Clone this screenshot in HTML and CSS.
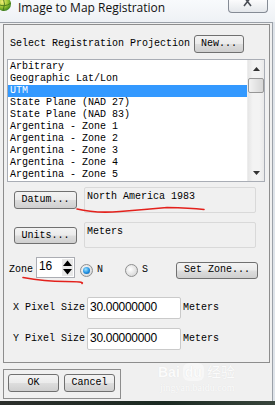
FILE: index.html
```html
<!DOCTYPE html>
<html>
<head>
<meta charset="utf-8">
<link rel="stylesheet" href="styles.css">
</head>
<body>
<div class="screen">
  <div class="titlebar">
    <svg class="app-icon" width="12" height="12" viewBox="0 0 12 12">
      <defs>
        <radialGradient id="g" cx="0.4" cy="0.35" r="0.7">
          <stop offset="0" stop-color="#f4f07a"/>
          <stop offset="0.55" stop-color="#9bc531"/>
          <stop offset="1" stop-color="#2f7a1e"/>
        </radialGradient>
      </defs>
      <circle cx="4" cy="4" r="7" fill="url(#g)"/>
      <path d="M-2 4 Q4 8 11 3" stroke="#3a6b17" stroke-width="0.8" fill="none"/>
      <path d="M3 -3 Q6 4 3 11" stroke="#3a6b17" stroke-width="0.8" fill="none"/>
    </svg>
    <span class="title">Image to Map Registration</span>
    <div class="close">
      <svg width="10" height="7" viewBox="0 0 10 7">
        <path d="M1 -3 L8 6 M8 -3 L1 6" stroke="#4b4f57" stroke-width="1.6" fill="none"/>
      </svg>
    </div>
  </div>

  <div class="client">
    <div class="panel">
      <div class="select-row">
        <span>Select Registration Projection</span>
        <button class="btn new-btn">New...</button>
      </div>

      <div class="list">
        <ul class="items">
          <li>Arbitrary</li>
          <li>Geographic Lat/Lon</li>
          <li class="selected">UTM</li>
          <li>State Plane (NAD 27)</li>
          <li>State Plane (NAD 83)</li>
          <li>Argentina - Zone 1</li>
          <li>Argentina - Zone 2</li>
          <li>Argentina - Zone 3</li>
          <li>Argentina - Zone 4</li>
          <li>Argentina - Zone 5</li>
        </ul>
        <div class="scroll">
          <div class="arrow">
            <svg width="7" height="4" viewBox="0 0 7 4"><path d="M0 4 L3.5 0 L7 4 Z" fill="#333"/></svg>
          </div>
          <div class="thumb"></div>
          <div class="track"></div>
          <div class="arrow">
            <svg width="7" height="4" viewBox="0 0 7 4"><path d="M0 0 L3.5 4 L7 0 Z" fill="#333"/></svg>
          </div>
        </div>
      </div>

      <div class="field-row datum-row">
        <button class="btn side-btn">Datum...</button>
        <div class="info">North America 1983</div>
      </div>

      <div class="field-row units-row">
        <button class="btn side-btn units-btn">Units...</button>
        <div class="info">Meters</div>
      </div>

      <div class="zone-row">
        <span class="zone-label">Zone</span>
        <div class="spin">
          <span class="spin-value">16</span>
          <svg class="spin-arrows" width="11" height="17" viewBox="0 0 11 17">
            <rect x="0" y="0" width="11" height="17" fill="#e8e8e8"/>
            <path d="M1 7 L5.5 1.5 L10 7 Z" fill="#000"/>
            <path d="M1 10 L5.5 15.5 L10 10 Z" fill="#000"/>
          </svg>
        </div>
        <span class="radio checked"></span>
        <span class="radio-label">N</span>
        <span class="radio radio-s"></span>
        <span class="radio-label">S</span>
        <button class="btn setzone-btn">Set Zone...</button>
      </div>

      <div class="px-row x-row">
        <span>X Pixel Size</span>
        <div class="px-field">30.00000000</div>
        <span class="unit">Meters</span>
      </div>
      <div class="px-row y-row">
        <span>Y Pixel Size</span>
        <div class="px-field">30.00000000</div>
        <span class="unit">Meters</span>
      </div>
    </div>

    <div class="actions">
      <button class="btn action-btn">OK</button>
      <button class="btn action-btn">Cancel</button>
    </div>
  </div>
  <div class="desktop"></div>

  <div class="watermark">
    <div class="wm-logo"><span class="wm-bai">Bai</span><span class="wm-du">du</span><span class="wm-cn">经验</span></div>
    <div class="wm-url">jingyan.baidu.com</div>
  </div>

  <svg class="annotations" width="275" height="405" viewBox="0 0 275 405">
    <path d="M77 209 Q95 213.5 120 211.5 T167 207.5 Q190 208 204 209.5" stroke="#e3211c" stroke-width="1.6" fill="none" stroke-linecap="round"/>
    <path d="M23 277.5 Q45 281.5 65 281.5 T82 283.5" stroke="#e3211c" stroke-width="1.6" fill="none" stroke-linecap="round"/>
  </svg>
</div>
</body>
</html>
```

FILE: styles.css
```css
* {
  box-sizing: border-box;
}

html,
body {
  margin: 0;
  padding: 0;
}

body {
  width: 275px;
  height: 405px;
  overflow: hidden;
  background: #dfe4ea;
  font-family: "Liberation Mono", "DejaVu Sans Mono", monospace;
  font-size: 10px;
  line-height: 12px;
  color: #000;
}

.screen {
  position: relative;
  width: 275px;
  height: 405px;
}

/* ---------- title bar ---------- */
.titlebar {
  height: 22px;
  display: flex;
  align-items: flex-start;
  background: linear-gradient(#f8fafc, #eef1f5);
}

.app-icon {
  flex: none;
  display: block;
}

.title {
  font-family: "Open Sans", "Liberation Sans", sans-serif;
  font-size: 12px;
  line-height: 14px;
  margin-left: 6px;
  margin-top: 1px;
  color: #111;
}

.close {
  margin-left: auto;
  margin-right: 7px;
  width: 40px;
  height: 13px;
  border: 1px solid #858b95;
  border-top: none;
  border-radius: 0 0 4px 4px;
  background: linear-gradient(#fbfbfc, #e4e7eb);
  display: flex;
  justify-content: center;
}

/* ---------- client area ---------- */
.client {
  width: 273px;
  height: 379px;
  border-top: 1px solid #9ba1a9;
  border-right: 1px solid #9ba1a9;
  background: #f0f0f0;
  padding: 1px 0 2px 3px;
}

.panel {
  width: 267px;
  height: 339px;
  border: 1px solid #8d8d8d;
}

.btn {
  font-family: "Liberation Mono", "DejaVu Sans Mono", monospace;
  font-size: 10px;
  line-height: 12px;
  color: #000;
  padding: 0;
  margin: 0;
  border: 1px solid #707070;
  border-radius: 3px;
  background: linear-gradient(#f3f3f3 0%, #ebebeb 48%, #dddddd 52%, #cfcfcf 100%);
  display: flex;
  align-items: center;
  justify-content: center;
}

.select-row {
  display: flex;
  align-items: center;
  height: 18px;
  margin-top: 10px;
  padding-left: 6px;
}

.new-btn {
  margin-left: 4px;
  width: 50px;
  height: 18px;
}

/* ---------- list ---------- */
.list {
  margin: 6px 0 0 3px;
  width: 258px;
  height: 123px;
  border: 1px solid #a9adb5;
  background: #fff;
  display: flex;
}

.items {
  flex: 1;
  list-style: none;
  margin: 0;
  padding: 1px 0 0 0;
}

.items li {
  height: 12px;
  line-height: 12px;
  padding-left: 2px;
  white-space: nowrap;
}

.items li.selected {
  background: #3399ff;
  color: #fff;
}

.scroll {
  width: 17px;
  display: flex;
  flex-direction: column;
  background: linear-gradient(to right, #e6e6e6, #f3f3f3 30%, #f3f3f3 70%, #e9e9e9);
  border-left: 1px solid #ededed;
}

.arrow {
  height: 17px;
  display: flex;
  align-items: center;
  justify-content: center;
}

.thumb {
  height: 15px;
  margin: 1px 0 0 0;
  border: 1px solid #979797;
  border-radius: 2px;
  background: linear-gradient(to right, #f2f2f2, #e4e4e4 50%, #d6d6d6);
}

.track {
  flex: 1;
}

/* ---------- datum / units ---------- */
.field-row {
  display: flex;
  align-items: flex-start;
  gap: 7px;
  height: 26px;
  padding-left: 10px;
}

.datum-row {
  margin-top: 5px;
}

.units-row {
  margin-top: 9px;
}

.side-btn {
  width: 63px;
  height: 18px;
  margin-top: 4px;
}

.units-btn {
  margin-top: 5px;
  height: 17px;
}

.info {
  width: 172px;
  height: 26px;
  border: 1px solid #d9d9d9;
  border-radius: 2px;
  background: #f0f0f0;
  padding: 3px 0 0 2px;
  white-space: nowrap;
}

/* ---------- zone ---------- */
.zone-row {
  display: flex;
  align-items: center;
  height: 26px;
  margin-top: 9px;
  padding-left: 5px;
}

.spin {
  align-self: flex-start;
  margin-left: 3px;
  width: 39px;
  height: 21px;
  border: 1px solid #abadb3;
  background: #fff;
  display: flex;
  align-items: flex-start;
  justify-content: space-between;
  padding: 1px 1px 0 2px;
}

.spin-value {
  font-family: "Liberation Sans", Arial, sans-serif;
  font-size: 12px;
  line-height: 14px;
  letter-spacing: -0.3px;
}

.spin-arrows {
  display: block;
}

.radio {
  width: 13px;
  height: 13px;
  margin-left: 5px;
  border-radius: 50%;
  border: 1px solid #8e8f8f;
  background: radial-gradient(circle at 40% 40%, #ffffff, #dcdcdc 70%, #c9c9c9);
  position: relative;
}

.radio.checked::after {
  content: "";
  position: absolute;
  left: 2px;
  top: 2px;
  width: 7px;
  height: 7px;
  border-radius: 50%;
  background: radial-gradient(circle at 40% 35%, #9fe4ff, #1f8ee0 55%, #0a4f8f);
}

.radio-s {
  margin-left: 22px;
}

.radio-label {
  margin-left: 4px;
}

.setzone-btn {
  margin-left: 28px;
  width: 82px;
  height: 17px;
}

/* ---------- pixel size ---------- */
.px-row {
  display: flex;
  align-items: center;
  height: 22px;
  padding-left: 9px;
}

.x-row {
  margin-top: 14px;
}

.y-row {
  margin-top: 9px;
}

.px-field {
  margin-left: 2px;
  width: 94px;
  height: 22px;
  border: 1px solid #cacaca;
  border-radius: 2px;
  background: #fff;
  padding: 2px 0 0 2px;
  font-family: "Liberation Sans", Arial, sans-serif;
  font-size: 12px;
  line-height: 14px;
  letter-spacing: -0.3px;
}

.unit {
  margin-left: 2px;
}

/* ---------- actions ---------- */
.actions {
  margin-top: 6px;
  width: 118px;
  height: 30px;
  border: 1px solid #8d8d8d;
  display: flex;
  gap: 5px;
  padding: 4px 0 0 4px;
}

.action-btn {
  width: 51px;
  height: 18px;
}

.desktop {
  height: 4px;
  width: 275px;
  background: linear-gradient(to right, #2c2f2c, #1b2a22 60%, #39453c);
}

/* ---------- overlays ---------- */
.watermark {
  position: absolute;
  left: 158px;
  top: 362px;
  color: #fbfbfb;
  text-shadow: 0 0 1px #dedede;
  pointer-events: none;
}

.wm-logo {
  font-family: "Liberation Sans", Arial, sans-serif;
  font-weight: bold;
  font-size: 14px;
  line-height: 18px;
  white-space: nowrap;
}

.wm-du {
  display: inline-block;
  margin: 0 3px;
  padding: 0 2px;
  border-radius: 6px;
  background: #f7f7f7;
}

.wm-cn {
  font-family: "Noto Sans CJK SC", sans-serif;
  font-weight: normal;
}

.wm-url {
  font-family: "Liberation Serif", serif;
  font-size: 10px;
  line-height: 12px;
  margin-top: 1px;
  margin-left: 2px;
}

.annotations {
  position: absolute;
  left: 0;
  top: 0;
  pointer-events: none;
}
```
